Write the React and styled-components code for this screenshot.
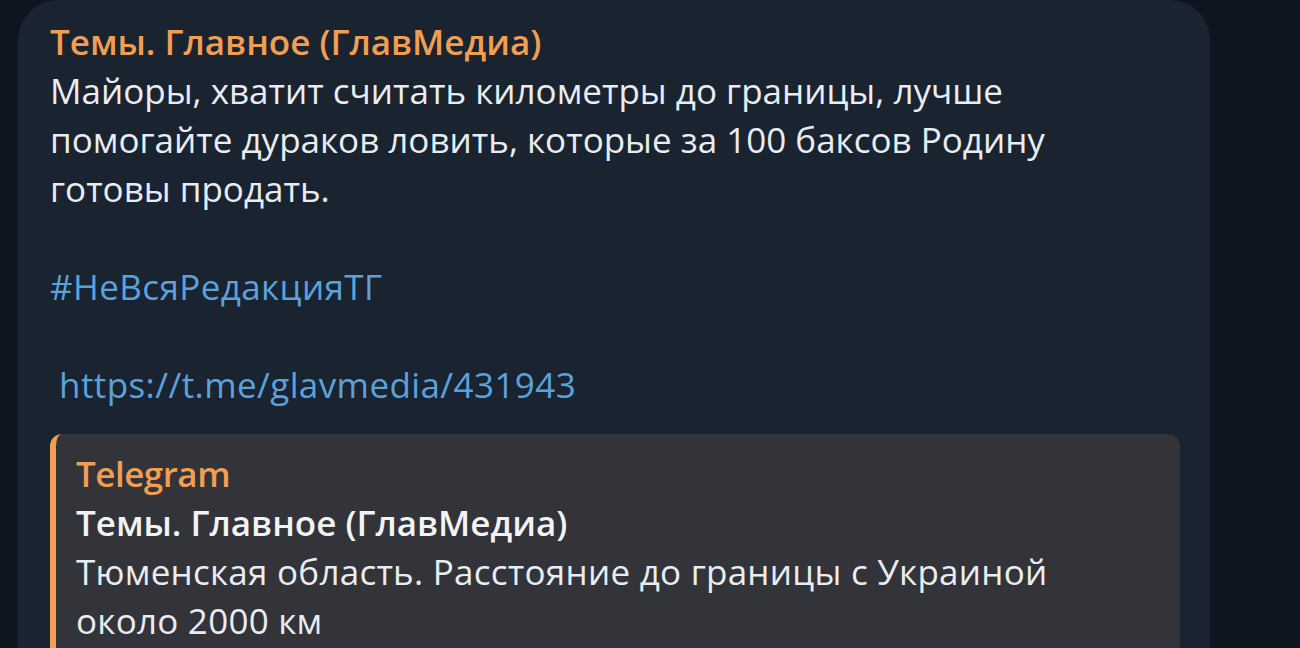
import React from "react";
import styled, { createGlobalStyle } from "styled-components";

const Global = createGlobalStyle`
  html, body { margin: 0; padding: 0; background: #0e1520; }
  body { font-family: "Open Sans", "Noto Sans", sans-serif; overflow: hidden; }
`;

const Page = styled.div`
  width: 1300px;
  height: 648px;
  background: #0e1520;
  display: flex;
  align-items: flex-start;
  padding-left: 18px;
  box-sizing: border-box;
`;

const Bubble = styled.div`
  width: 1192px;
  min-height: 700px;
  background: #1a2330;
  border-radius: 40px 40px 0 0;
  padding: 17px 30px 0 32px;
  box-sizing: border-box;
  font-size: 35px;
  line-height: 49px;
  color: #e9edf1;
`;

const Author = styled.div`
  color: #f19e53;
  font-weight: 600;
`;

const Paragraph = styled.div`
  min-height: 49px;
  white-space: pre-wrap;
`;

const Link = styled.span`
  color: #5aa2dd;
  letter-spacing: 0.4px;
`;

const Preview = styled.div`
  margin-top: 25px;
  background: #323439;
  border-left: 6px solid #f19e53;
  border-radius: 12px;
  padding: 15px 24px 20px 20px;
`;

const SiteName = styled.div`
  color: #f19e53;
  font-weight: 600;
  letter-spacing: -0.5px;
`;

const PreviewTitle = styled.div`
  color: #f1f3f5;
  font-weight: 600;
`;

const PreviewText = styled.div`
  color: #e9edf1;
  letter-spacing: 0.25px;
`;

export default function App() {
  return (
    <>
      <Global />
      <Page>
        <Bubble>
          <Author>Темы. Главное (ГлавМедиа)</Author>
          <Paragraph>
            Майоры, хватит считать километры до границы, лучше{"\n"}помогайте дураков ловить, которые за 100 баксов Родину{"\n"}готовы продать.
          </Paragraph>
          <Paragraph />
          <Paragraph><Link>#НеВсяРедакцияТГ</Link></Paragraph>
          <Paragraph />
          <Paragraph> <Link>https://t.me/glavmedia/431943</Link></Paragraph>
          <Preview>
            <SiteName>Telegram</SiteName>
            <PreviewTitle>Темы. Главное (ГлавМедиа)</PreviewTitle>
            <PreviewText>Тюменская область. Расстояние до границы с Украиной<br />около 2000 км</PreviewText>
          </Preview>
        </Bubble>
      </Page>
    </>
  );
}
